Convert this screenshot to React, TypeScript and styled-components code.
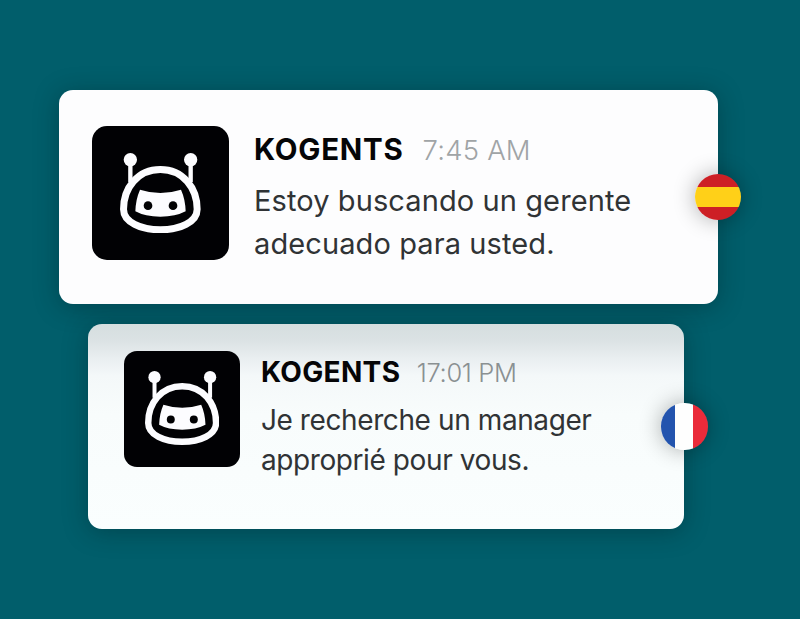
import React from "react";
import styled, { createGlobalStyle } from "styled-components";

const GlobalStyle = createGlobalStyle`
  *, *::before, *::after { box-sizing: border-box; }
  html, body { margin: 0; padding: 0; background: #015e6b; }
  body { font-family: Inter, "Liberation Sans", sans-serif; }
`;

type Variant = "large" | "small";

const Stage = styled.main`
  display: flex;
  flex-direction: column;
  align-items: flex-start;
  gap: 20.5px;
  width: 800px;
  height: 619px;
  padding: 90.4px 0 0 59px;
  overflow: hidden;
  background: #015e6b;
`;

const Card = styled.article<{ $variant: Variant }>`
  position: relative;
  flex: none;
  display: flex;
  align-items: flex-start;
  border-radius: 14px;
  ${({ $variant }) =>
    $variant === "large"
      ? `
    width: 659px;
    height: 213.5px;
    padding: 35.5px 0 0 33px;
    gap: 25px;
    background: #fdfdfe;
    box-shadow: 0 3px 24px rgba(0, 28, 30, 0.36);
  `
      : `
    width: 596px;
    height: 204.5px;
    margin-left: 29.4px;
    padding: 27px 0 0 35.5px;
    gap: 21px;
    background: linear-gradient(180deg, #d5dedf 0, #dbe2e4 16px, #e9eef0 34px, #f4f8f9 52px, #f8fcfc 90px, #fafefe 100%);
    box-shadow: 0 3px 24px rgba(0, 28, 30, 0.36);
  `}
`;

const Avatar = styled.div<{ $variant: Variant }>`
  flex: none;
  display: grid;
  place-items: center;
  background: #010104;
  ${({ $variant }) =>
    $variant === "large"
      ? "width: 137px; height: 134px; border-radius: 15px; svg { width: 80.7px; height: 80.3px; }"
      : "width: 116px; height: 116px; border-radius: 13px; padding-bottom: 3px; svg { width: 74.3px; height: 74px; }"}
  svg { display: block; }
`;

const Content = styled.div<{ $variant: Variant }>`
  padding-top: ${({ $variant }) => ($variant === "large" ? "6px" : "4px")};
  white-space: nowrap;
`;

const Heading = styled.header<{ $variant: Variant }>`
  display: flex;
  align-items: baseline;
  height: ${({ $variant }) => ($variant === "large" ? "47.3px" : "44.3px")};
  line-height: 34px;
  gap: ${({ $variant }) => ($variant === "large" ? "19px" : "16.5px")};
`;

const Name = styled.strong<{ $variant: Variant }>`
  color: #050507;
  font-weight: 700;
  font-size: ${({ $variant }) => ($variant === "large" ? "29.5px" : "28px")};
  letter-spacing: ${({ $variant }) => ($variant === "large" ? "0.75px" : "0.35px")};
`;

const Time = styled.time<{ $variant: Variant }>`
  color: ${({ $variant }) => ($variant === "large" ? "#a0a4a6" : "#8a9092")};
  font-weight: ${({ $variant }) => ($variant === "large" ? 350 : 300)};
  font-size: ${({ $variant }) => ($variant === "large" ? "27.5px" : "25.5px")};
  letter-spacing: ${({ $variant }) => ($variant === "large" ? "0.2px" : "-0.35px")};
`;

const Message = styled.p<{ $variant: Variant }>`
  margin: 0;
  color: #303335;
  font-weight: 420;
  font-size: ${({ $variant }) => ($variant === "large" ? "29px" : "28px")};
  line-height: ${({ $variant }) => ($variant === "large" ? "43px" : "40px")};
  letter-spacing: ${({ $variant }) => ($variant === "large" ? "0.1px" : "-0.4px")};
`;

const Flag = styled.span<{ $variant: Variant }>`
  position: absolute;
  right: -23.2px;
  top: ${({ $variant }) => ($variant === "large" ? "83.7px" : "79px")};
  width: 46.3px;
  height: 46.3px;
  border-radius: 50%;
  box-shadow: 0 0 22px rgba(0, 0, 0, 0.32);
  background: ${({ $variant }) =>
    $variant === "large"
      ? "linear-gradient(180deg, #cd1f25 0 13px, #ffd018 13px 33px, #cd1f25 33px)"
      : "linear-gradient(90deg, #2354ae 0 14px, #fefefe 14px 32.5px, #ea2b3a 32.5px)"};
`;

const Robot = () => (
  <svg viewBox="85 81 242 241" aria-hidden="true">
    <g fill="none" stroke="#fcfcff" strokeWidth="13">
      <path d="M116 101V168M297 101V168" />
      <path
        strokeWidth="21"
        d="M206 130.5C138 130.5 95.500 186 95.500 250C95.500 289 148 311.500 206 311.500C264 311.500 316.500 289 316.500 250C316.500 186 274 130.500 206 130.500Z"
      />
    </g>
    <g fill="#fcfcff">
      <circle cx="116" cy="101" r="20" />
      <circle cx="297" cy="101" r="20" />
      <path d="M145 191Q206 211 268 191Q281 220 282 256Q252 272 206 272Q160 272 131 256Q132 220 145 191Z" />
    </g>
    <g fill="#010104">
      <circle cx="169" cy="239" r="13" />
      <circle cx="244" cy="239" r="13" />
    </g>
  </svg>
);

interface MessageCardProps {
  variant: Variant;
  time: string;
  lines: string[];
  language: string;
}

const MessageCard = ({ variant, time, lines, language }: MessageCardProps) => (
  <Card $variant={variant} lang={language}>
    <Avatar $variant={variant}>
      <Robot />
    </Avatar>
    <Content $variant={variant}>
      <Heading $variant={variant}>
        <Name $variant={variant}>KOGENTS</Name>
        <Time $variant={variant}>{time}</Time>
      </Heading>
      <Message $variant={variant}>
        {lines[0]}
        <br />
        {lines[1]}
      </Message>
    </Content>
    <Flag $variant={variant} />
  </Card>
);

export default function App() {
  return (
    <>
      <GlobalStyle />
      <Stage>
        <MessageCard
          variant="large"
          language="es"
          time="7:45 AM"
          lines={["Estoy buscando un gerente", "adecuado para usted."]}
        />
        <MessageCard
          variant="small"
          language="fr"
          time="17:01 PM"
          lines={["Je recherche un manager", "approprié pour vous."]}
        />
      </Stage>
    </>
  );
}
